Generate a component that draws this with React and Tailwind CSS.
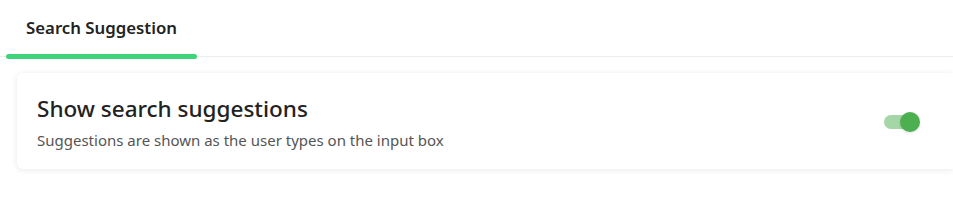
import React, { useState } from 'react';

const Toggle = ({ checked, onChange }) => (
  <button
    type="button"
    onClick={() => onChange(!checked)}
    className="relative flex h-[20px] w-[36px] items-center"
  >
    <span className={`h-[14px] w-[34px] rounded-full ${checked ? 'bg-[#a5d6a7]' : 'bg-gray-300'}`} />
    <span
      className={`absolute top-0 h-[20px] w-[20px] rounded-full shadow-sm ${checked ? 'left-[16px] bg-[#4caf50]' : 'left-0 bg-white'}`}
    />
  </button>
);

const App = () => {
  const [enabled, setEnabled] = useState(true);

  return (
    <div className="min-h-screen bg-white font-['Noto_Sans',sans-serif] text-[#222]">
      {/* Tabs */}
      <div className="relative flex border-b border-[#ececec] pl-[6px]">
        <div className="flex w-[191px] flex-col items-center">
          <span className="pt-[17px] pb-[15px] text-[16.8px] font-semibold leading-[22px] text-[#222]">
            Search Suggestion
          </span>
          <span className="mb-[-3px] h-[5px] w-full rounded-full bg-[#3fd37a]" />
        </div>
      </div>

      {/* Settings card */}
      <div className="pt-[16px] pl-[17px]">
        <div className="flex items-center justify-between rounded-l-[6px] pt-[21px] pb-[19px] pr-[33px] pl-[20px] shadow-[0_1px_6px_rgba(0,0,0,0.09)]">
          <div className="flex flex-col">
            <span className="text-[22.5px] font-medium leading-[30px] text-[#222]">
              Show search suggestions
            </span>
            <span className="mt-[6px] text-[15px] leading-[20px] text-[#555]">
              Suggestions are shown as the user types on the input box
            </span>
          </div>
          <Toggle checked={enabled} onChange={setEnabled} />
        </div>
      </div>
    </div>
  );
};

export default App;
